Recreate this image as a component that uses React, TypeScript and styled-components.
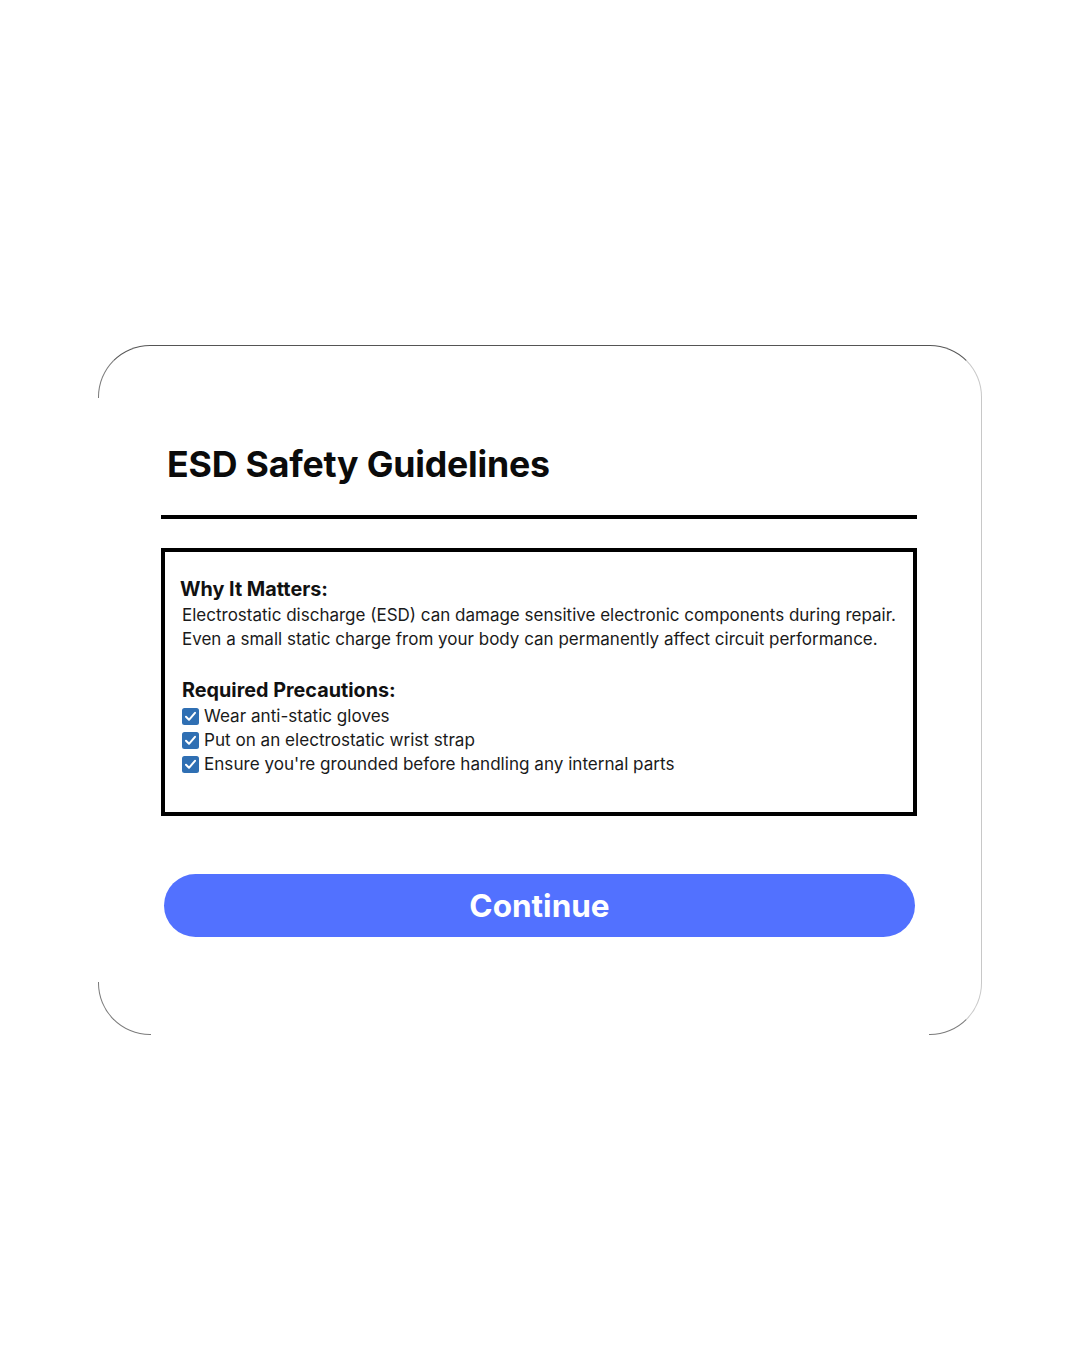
import styled, { createGlobalStyle } from "styled-components";

const GlobalStyle = createGlobalStyle`
  html, body {
    margin: 0;
    padding: 0;
    background: #ffffff;
  }
  body {
    font-family: Inter, "Noto Sans", "Liberation Sans", sans-serif;
    color: #111111;
  }
`;

const Page = styled.main`
  width: 1080px;
  height: 1350px;
  box-sizing: border-box;
  padding: 345px 0 0 98px;
  display: flex;
  align-items: flex-start;
`;

const Card = styled.section`
  position: relative;
  width: 884px;
  height: 690px;
  box-sizing: border-box;
  padding: 95px 64px 0 62px;
  border-radius: 52px;
  border: 1px solid #7a7a7a;
  border-right-color: #c8c8c8;
  border-top-color: #555555;
  background: #ffffff;
  display: flex;
  flex-direction: column;

  /* the straight left and bottom edges are not drawn, only the corners */
  &::before {
    content: "";
    position: absolute;
    left: -1px;
    top: 52px;
    bottom: 52px;
    width: 1px;
    background: #ffffff;
  }

  &::after {
    content: "";
    position: absolute;
    bottom: -1px;
    left: 52px;
    right: 52px;
    height: 1px;
    background: #ffffff;
  }
`;

const Title = styled.h1`
  margin: 0 0 0 6px;
  font-size: 35.7px;
  line-height: 46px;
  font-weight: 700;
  letter-spacing: -0.2px;
  color: #0b0b0b;
`;

const Divider = styled.hr`
  margin: 28px 0 0;
  height: 4px;
  border: none;
  background: #000000;
`;

const InfoBox = styled.div`
  margin-top: 29px;
  height: 268px;
  box-sizing: border-box;
  border: 4px solid #000000;
  padding: 25px 12px 0 15px;
`;

const Heading = styled.h2<{ $indent?: number }>`
  margin: 0 0 2px ${(p) => p.$indent ?? 0}px;
  font-size: 19.8px;
  line-height: 24px;
  font-weight: 700;
  color: #111111;
`;

const Paragraph = styled.p`
  margin: 0 0 27px 2px;
  font-size: 17px;
  line-height: 24px;
  color: #1a1a1a;
  white-space: nowrap;
`;

const List = styled.ul`
  list-style: none;
  margin: 0 0 0 2px;
  padding: 0;
`;

const Item = styled.li`
  display: flex;
  align-items: center;
  gap: 5px;
  font-size: 17.1px;
  line-height: 24px;
  color: #1a1a1a;
`;

const Button = styled.button`
  margin: 58px 2px 0 3px;
  height: 63px;
  border: none;
  border-radius: 32px;
  background: #5271ff;
  color: #ffffff;
  font-family: Inter, "Noto Sans", "Liberation Sans", sans-serif;
  font-size: 31.5px;
  font-weight: 700;
  cursor: pointer;
`;

const Check = () => (
  <svg width="17" height="17" viewBox="0 0 17 17" aria-hidden="true">
    <rect x="0" y="0" width="17" height="17" rx="2.5" fill="#2f6fb3" />
    <path
      d="M4 8.8 L7 11.8 L13 4.8"
      fill="none"
      stroke="#ffffff"
      strokeWidth="2"
      strokeLinecap="round"
      strokeLinejoin="round"
    />
  </svg>
);

const precautions = [
  "Wear anti-static gloves",
  "Put on an electrostatic wrist strap",
  "Ensure you're grounded before handling any internal parts",
];

export default function App() {
  return (
    <>
      <GlobalStyle />
      <Page>
        <Card>
          <Title>ESD Safety Guidelines</Title>
          <Divider />
          <InfoBox>
            <Heading>Why It Matters:</Heading>
            <Paragraph>
              Electrostatic discharge (ESD) can damage sensitive electronic components during repair.
              <br />
              Even a small static charge from your body can permanently affect circuit performance.
            </Paragraph>
            <Heading $indent={2}>Required Precautions:</Heading>
            <List>
              {precautions.map((p) => (
                <Item key={p}>
                  <Check />
                  {p}
                </Item>
              ))}
            </List>
          </InfoBox>
          <Button>Continue</Button>
        </Card>
      </Page>
    </>
  );
}
